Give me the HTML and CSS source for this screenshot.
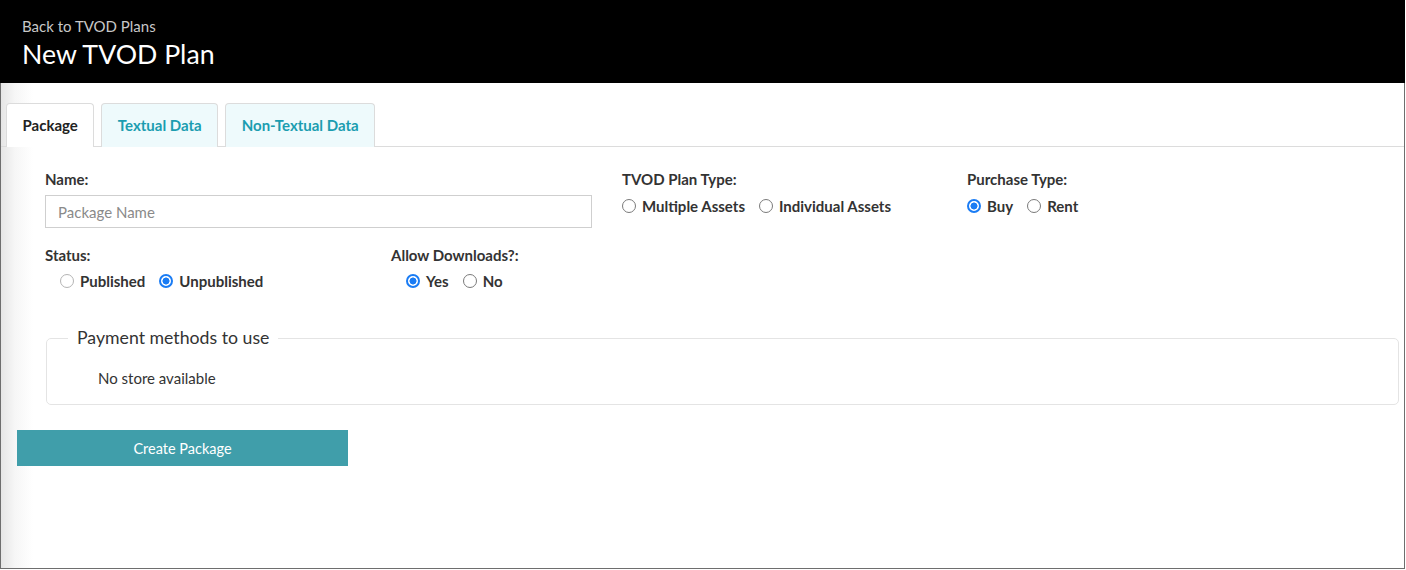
FILE: index.html
```html
<!DOCTYPE html>
<html>
<head>
<meta charset="utf-8">
<link rel="stylesheet" href="styles.css">
</head>
<body>
<div class="page">
  <header class="header">
    <div class="back">Back to TVOD Plans</div>
    <h1 class="title">New TVOD Plan</h1>
  </header>
  <div class="frame">
    <nav class="tabs">
      <div class="tab active">Package</div>
      <div class="tab">Textual Data</div>
      <div class="tab">Non-Textual Data</div>
    </nav>
    <form class="form">
      <div class="row row1">
        <div class="field f-name">
          <label class="lbl">Name:</label>
          <input class="text-input" type="text" placeholder="Package Name">
        </div>
        <div class="field f-type">
          <label class="lbl">TVOD Plan Type:</label>
          <div class="radios">
            <label class="opt"><input type="radio" name="type"><span>Multiple Assets</span></label>
            <label class="opt"><input type="radio" name="type"><span>Individual Assets</span></label>
          </div>
        </div>
        <div class="field f-purchase">
          <label class="lbl">Purchase Type:</label>
          <div class="radios">
            <label class="opt"><input type="radio" name="purchase" checked><span>Buy</span></label>
            <label class="opt"><input type="radio" name="purchase"><span>Rent</span></label>
          </div>
        </div>
      </div>
      <div class="row row2">
        <div class="field f-status">
          <label class="lbl">Status:</label>
          <div class="radios indent">
            <label class="opt"><input class="light" type="radio" name="status"><span>Published</span></label>
            <label class="opt"><input type="radio" name="status" checked><span>Unpublished</span></label>
          </div>
        </div>
        <div class="field f-dl">
          <label class="lbl">Allow Downloads?:</label>
          <div class="radios indent">
            <label class="opt"><input type="radio" name="dl" checked><span>Yes</span></label>
            <label class="opt"><input type="radio" name="dl"><span>No</span></label>
          </div>
        </div>
      </div>
      <fieldset class="payments">
        <legend>Payment methods to use</legend>
        <p class="none">No store available</p>
      </fieldset>
      <button type="button" class="create">Create Package</button>
    </form>
  </div>
</div>
</body>
</html>
```

FILE: styles.css
```css
* { box-sizing: border-box; }
html, body { margin: 0; padding: 0; }
body {
  font-family: Lato, "Open Sans", "Liberation Sans", sans-serif;
  color: #333;
  background: #fff;
  width: 1406px;
  height: 570px;
  overflow: hidden;
}
.page {
  width: 1405px;
  height: 569px;
  display: flex;
  flex-direction: column;
}
.header {
  background: #000;
  height: 83px;
  padding: 16px 0 0 22px;
  flex: none;
}
.back {
  color: #c8c8c8;
  font-size: 15px;
  line-height: 20px;
}
.title {
  margin: 0;
  color: #fff;
  font-weight: 400;
  font-size: 26.7px;
  line-height: 36px;
}
.frame {
  flex: 1;
  border-left: 1px solid #6e6e6e;
  border-right: 1px solid #6e6e6e;
  border-bottom: 1px solid #6e6e6e;
  background: linear-gradient(to right, #e6e6e6 0px, #f6f6f6 14px, #fff 32px);
}
.tabs {
  display: flex;
  gap: 7px;
  padding: 20px 0 0 5px;
  border-bottom: 1px solid #dcdcdc;
  height: 64px;
}
.tab {
  height: 44px;
  padding: 0 15.5px 2px;
  border: 1px solid #dcdcdc;
  border-bottom: none;
  border-radius: 4px 4px 0 0;
  background: #eefafc;
  color: #1b9db0;
  font-weight: 700;
  font-size: 15px;
  display: flex;
  align-items: center;
}
.tab.active {
  background: #fff;
  color: #222;
  margin-bottom: -1px;
}
.form {
  padding: 23px 0 0 44px;
}
.row { display: flex; }
.lbl {
  display: block;
  font-weight: 700;
  font-size: 15px;
  line-height: 18px;
  color: #333;
}
.f-name { width: 546px; margin-right: 31px; }
.f-type { width: 345px; }
.f-name .lbl { margin-bottom: 7px; }
.text-input {
  display: block;
  width: 547px;
  height: 33px;
  border: 1px solid #cfcfcf;
  padding: 0 12px;
  font-family: inherit;
  font-size: 15px;
  color: #333;
  outline: none;
}
.text-input::placeholder { color: #8a8a8a; }
.radios {
  display: flex;
  gap: 14px;
  margin-top: 8px;
  height: 18px;
  align-items: center;
}
.row1 .radios { margin-top: 9px; }
.radios.indent { margin-left: 15px; }
.opt {
  display: flex;
  align-items: center;
  gap: 6px;
  font-weight: 700;
  font-size: 15px;
  line-height: 18px;
  color: #333;
}
.opt input {
  appearance: none;
  -webkit-appearance: none;
  margin: 0;
  width: 14px;
  height: 14px;
  border: 1.5px solid #7a7a7a;
  border-radius: 50%;
  background: #fff;
  flex: none;
}
.opt input.light { border-color: #b4b4b4; }
.opt input:checked {
  border: 2px solid #1a7cf4;
  background: radial-gradient(circle, #1a7cf4 0 3.2px, #fff 3.8px);
}
.row2 { margin-top: 18px; }
.f-status { width: 346px; }
.payments {
  margin: 37px 5px 0 1px;
  border: 1px solid #e4e4e4;
  border-radius: 5px;
  padding: 0 21px 16px;
}
.payments legend {
  font-size: 17.7px;
  line-height: 22px;
  padding: 0 9px;
  color: #333;
}
.none {
  margin: 19px 0 0 30px;
  font-size: 15px;
  line-height: 20px;
}
.create {
  display: block;
  margin: 25px 0 0 -28px;
  width: 331px;
  height: 36px;
  border: none;
  background: #409eaa;
  color: #fff;
  font-family: inherit;
  font-size: 14.5px;
}
```
